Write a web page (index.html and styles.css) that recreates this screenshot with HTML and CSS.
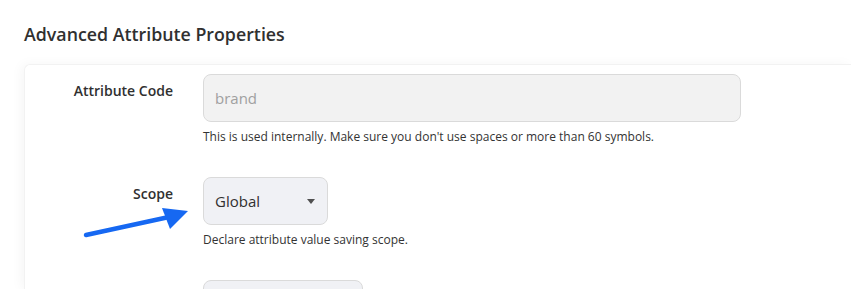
FILE: index.html
```html
<!DOCTYPE html>
<html lang="en">
<head>
    <meta charset="UTF-8">
    <meta name="viewport" content="width=device-width, initial-scale=1.0">
    <title>Advanced Attribute Properties</title>
    <link rel="stylesheet" href="styles.css">
</head>
<body>
    <h2 class="section-title">Advanced Attribute Properties</h2>

    <!-- Panel with the advanced attribute fields -->
    <div class="panel">
        <div class="field-row">
            <label class="field-label" for="attributeCode">Attribute Code</label>
            <div class="field-control">
                <input type="text" id="attributeCode" class="text-input" value="brand" disabled>
                <div class="field-note">This is used internally. Make sure you don't use spaces or more than 60 symbols.</div>
            </div>
        </div>

        <div class="field-row">
            <label class="field-label" for="scope">Scope</label>
            <div class="field-control">
                <div class="select-box select-scope">
                    <span>Global</span>
                    <span class="caret"></span>
                </div>
                <div class="field-note">Declare attribute value saving scope.</div>
            </div>
        </div>

        <div class="field-row">
            <label class="field-label"></label>
            <div class="field-control">
                <div class="select-box select-wide"></div>
            </div>
        </div>

        <!-- Annotation arrow pointing at the scope select -->
        <svg class="arrow" width="120" height="40" viewBox="0 0 120 40">
            <line x1="3" y1="27" x2="86" y2="9" stroke="#1668f2" stroke-width="4.5" stroke-linecap="round"/>
            <polygon points="105,3 79,0 87,21" fill="#1668f2"/>
        </svg>
    </div>
</body>
</html>
```

FILE: styles.css
```css
/* Page basics */
body {
    font-family: "Open Sans", Arial, sans-serif;
    background-color: #fff;
    color: #303030;
    margin: 0;
    padding: 0 0 0 24px;
    height: 289px;
    box-sizing: border-box;
    overflow: hidden;
}
.section-title {
    font-size: 17.8px;
    font-weight: 600;
    margin: 0;
    padding-top: 22px;
    height: 64px;
    box-sizing: border-box;
    line-height: 24px;
    color: #303030;
}
/* White panel that runs off the right edge */
.panel {
    position: relative;
    height: 225px;
    overflow: hidden;
    border-top: 1px solid #f2f2f2;
    border-left: 1px solid #f2f2f2;
    border-radius: 6px 0 0 0;
    box-shadow: -3px 0 12px rgba(0,0,0,0.04);
    padding-top: 9px;
    box-sizing: border-box;
}
.field-row {
    display: flex;
    gap: 30px;
    margin-bottom: 31px;
}
.field-label {
    width: 148px;
    text-align: right;
    font-size: 14px;
    font-weight: 600;
    line-height: 20px;
    padding-top: 7px;
    color: #303030;
}
.field-control {
    display: flex;
    flex-direction: column;
    gap: 6px;
}
.text-input {
    width: 538px;
    height: 48px;
    box-sizing: border-box;
    padding: 0 11px;
    border: 1px solid #dadada;
    border-radius: 8px;
    background-color: #f2f2f2;
    font-family: inherit;
    font-size: 15px;
    color: #a0a0a0;
    margin: 0;
}
.field-note {
    font-size: 12px;
    line-height: 18px;
    color: #333;
}
/* Fake select boxes */
.select-box {
    height: 48px;
    box-sizing: border-box;
    border: 1px solid #dadada;
    border-radius: 8px;
    background-color: #f0f1f5;
    display: flex;
    align-items: center;
    justify-content: space-between;
    padding: 0 12px 0 11px;
    font-size: 15px;
    color: #303030;
}
.select-scope {
    width: 125px;
}
.select-wide {
    width: 160px;
}
.caret {
    width: 0;
    height: 0;
    border-left: 4px solid transparent;
    border-right: 4px solid transparent;
    border-top: 5px solid #505050;
    margin-top: 1px;
}
/* Blue annotation arrow */
.arrow {
    position: absolute;
    left: 58px;
    top: 143px;
}
```
